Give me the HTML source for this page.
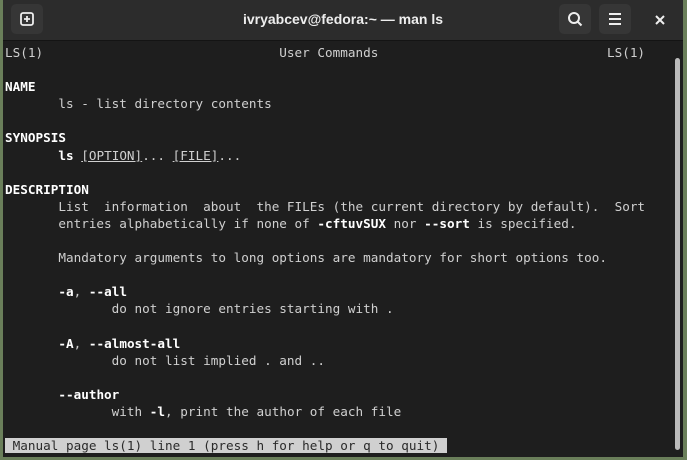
<!DOCTYPE html>
<html><head><style>
body{margin:0;width:687px;height:460px;background:#6a7f5a;position:relative;overflow:hidden;font-family:"DejaVu Sans Mono","Liberation Mono",monospace}
.win{position:absolute;left:3px;top:0;width:680px;height:457px;background:#1e1e1e;overflow:hidden}
.hdr{position:absolute;left:0;top:0;width:680px;height:40px;background:#2c2c2c;border-bottom:1px solid #141414}
.btn{position:absolute;top:4px;width:32px;height:30px;background:#363636;border-radius:5px}
.title{position:absolute;left:0;width:680px;top:11px;text-align:center;color:#eee;font:bold 14px "Liberation Sans",sans-serif}
.term{position:absolute;left:2px;top:44px;font-size:12.66px;line-height:17.1px;color:#d0d0d0;white-space:pre}
b{color:#fff}
u{text-decoration:underline}
.sb{position:absolute;right:3px;top:58px;width:5px;height:392px;background:#bbb;border-radius:3px}
.status{background:#d0d0d0;color:#2a2a2a}
</style></head><body>
<div class="win">
<div class="hdr">
<div class="btn" style="left:8px"><svg width="32" height="30"><rect x="10" y="9" width="12" height="12" rx="2" fill="none" stroke="#eee" stroke-width="1.8"/><path d="M16 12v6M13 15h6" stroke="#eee" stroke-width="1.8"/></svg></div>
<div class="title">ivryabcev@fedora:~ — man ls</div>
<div class="btn" style="left:556px"><svg width="32" height="30"><circle cx="15" cy="14" r="5" fill="none" stroke="#eee" stroke-width="2"/><path d="M18.5 17.5l4 4" stroke="#eee" stroke-width="2"/></svg></div>
<div class="btn" style="left:596px"><svg width="32" height="30"><path d="M10 10h12M10 15h12M10 20h12" stroke="#eee" stroke-width="2"/></svg></div>
<svg style="position:absolute;left:650px;top:13px" width="14" height="14"><path d="M3 3l8 8M11 3l-8 8" stroke="#eee" stroke-width="2"/></svg>
</div>
<div class="sb"></div>
<div class="term">LS(1)                               User Commands                              LS(1)

<b>NAME</b>
       ls - list directory contents

<b>SYNOPSIS</b>
       <b>ls</b> <u>[OPTION]</u>... <u>[FILE]</u>...

<b>DESCRIPTION</b>
       List  information  about  the FILEs (the current directory by default).  Sort
       entries alphabetically if none of <b>-cftuvSUX</b> nor <b>--sort</b> is specified.

       Mandatory arguments to long options are mandatory for short options too.

       <b>-a</b>, <b>--all</b>
              do not ignore entries starting with .

       <b>-A</b>, <b>--almost-all</b>
              do not list implied . and ..

       <b>--author</b>
              with <b>-l</b>, print the author of each file

<span class="status"> Manual page ls(1) line 1 (press h for help or q to quit) </span></div>
</div>
</body></html>
